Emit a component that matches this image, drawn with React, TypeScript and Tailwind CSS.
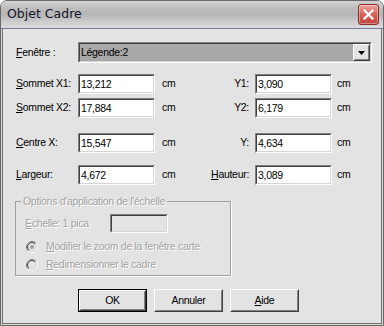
import type { ReactNode } from 'react'

const dim = 'text-[#a3a3a3] [text-shadow:1px_1px_0_#ffffff]'

function Sunken({ className, children }: { className?: string; children?: ReactNode }) {
  return (
    <div className={`border border-t-[#808080] border-l-[#808080] border-b-white border-r-white ${className ?? ''}`}>
      <div className="h-full w-full border border-t-[#404040] border-l-[#404040] border-b-[#d4d4d4] border-r-[#d4d4d4]">
        {children}
      </div>
    </div>
  )
}

function Field({ value }: { value: string }) {
  return (
    <Sunken className="h-[20px] w-[77px]">
      <div className="flex h-full items-center bg-white pl-[1px] leading-none">{value}</div>
    </Sunken>
  )
}

function Raised({ className, children }: { className?: string; children?: ReactNode }) {
  return (
    <div className={`border border-t-white border-l-white border-b-[#404040] border-r-[#404040] ${className ?? ''}`}>
      <div className="flex h-full w-full items-center justify-center border border-t-[#e3e3e3] border-l-[#e3e3e3] border-b-[#808080] border-r-[#808080] bg-[#e3e3e3]">
        {children}
      </div>
    </div>
  )
}

function Radio({ checked }: { checked?: boolean }) {
  return (
    <svg width="12" height="12" viewBox="0 0 12 12" className="shrink-0">
      <circle cx="6" cy="6" r="5.5" fill="none" stroke="#ffffff" />
      <path d="M2.1 9.9 A5.5 5.5 0 0 1 9.9 2.1" fill="none" stroke="#808080" />
      <circle cx="6" cy="6" r="4.5" fill="#e3e3e3" stroke="#d4d4d4" />
      <path d="M2.8 9.2 A4.5 4.5 0 0 1 9.2 2.8" fill="none" stroke="#404040" />
      {checked && <circle cx="6" cy="6" r="2" fill="#a0a0a0" />}
    </svg>
  )
}

function Row({ label, value, rlabel, rvalue }: { label: ReactNode; value: string; rlabel: ReactNode; rvalue: string }) {
  return (
    <div className="flex h-[20px] items-center">
      <div className="flex w-[233px] items-center">
        <div className="w-[62px]">{label}</div>
        <Field value={value} />
        <div className="ml-[7px]">cm</div>
        <div className="flex-1 text-right">{rlabel}</div>
      </div>
      <div className="ml-[6px]">
        <Field value={rvalue} />
      </div>
      <div className="ml-[5px]">cm</div>
    </div>
  )
}

export default function App() {
  return (
    <div className="h-[326px] w-[384px] font-['Liberation_Sans',Arial,sans-serif] text-[10.5px] tracking-[-0.3px] text-black">
      <div className="flex h-full flex-col overflow-hidden rounded-t-[7px] border border-[#6a6a6a]">
        <div className="flex h-[27px] items-center justify-between bg-[linear-gradient(to_bottom,#d2d2d2_0%,#bcbcbc_30%,#b6b6b6_50%,#cacaca_75%,#dcdcdc_100%)] pl-[6px] pr-[4px]">
          <span className="font-['DejaVu_Sans',sans-serif] text-[12.5px] tracking-normal text-[#14142a]">Objet Cadre</span>
          <div className="flex h-[21px] w-[21px] items-center justify-center rounded-[3px] border border-[#8c2f2a] bg-[linear-gradient(to_bottom,#eea59c_0%,#d5625a_50%,#c0453e_100%)] shadow-[inset_0_0_0_1px_rgba(255,255,255,0.35)]">
            <svg width="11" height="11" viewBox="0 0 11 11">
              <path d="M1.5 1.5 L9.5 9.5 M9.5 1.5 L1.5 9.5" stroke="#ffffff" strokeWidth="2.2" strokeLinecap="square" />
            </svg>
          </div>
        </div>
        <div className="h-px bg-[#7676a8]" />
        <div className="flex flex-1 flex-col bg-[#d6d6d6] px-px pb-px">
          <div className="flex flex-1 flex-col border-x border-b border-[#737373] bg-[#e3e3e3] pl-[13px] pt-[13px]">
            <div className="flex h-[21px] items-center">
              <div className="w-[62px]">
                <u>F</u>enêtre :
              </div>
              <Sunken className="h-[21px] w-[294px]">
                <div className="flex h-full items-center bg-[#a9a9a9]">
                  <span className="flex-1 pl-[1px]">Légende:2</span>
                  <Raised className="h-[17px] w-[17px]">
                    <svg width="7" height="4" viewBox="0 0 7 4">
                      <polygon points="0,0 7,0 3.5,4" fill="#000000" />
                    </svg>
                  </Raised>
                </div>
              </Sunken>
            </div>

            <div className="mt-[11px]">
              <Row
                label={<><u>S</u>ommet X1:</>}
                value="13,212"
                rlabel="Y1:"
                rvalue="3,090"
              />
            </div>
            <div className="mt-[4px]">
              <Row
                label={<><u>S</u>ommet X2:</>}
                value="17,884"
                rlabel="Y2:"
                rvalue="6,179"
              />
            </div>
            <div className="mt-[15px]">
              <Row label={<><u>C</u>entre X:</>} value="15,547" rlabel="Y:" rvalue="4,634" />
            </div>
            <div className="mt-[12px]">
              <Row
                label={<><u>L</u>argeur:</>}
                value="4,672"
                rlabel={<><u>H</u>auteur:</>}
                rvalue="3,089"
              />
            </div>

            <div className="relative -ml-px mt-[16px] h-[75px] w-[216px] border border-[#a0a0a0] shadow-[1px_1px_0_#ffffff] pl-[9px] pt-[12px]">
              <span className={`absolute -top-[8px] left-[5px] bg-[#e3e3e3] px-[2px] ${dim}`}>
                Options d'application de l'échelle
              </span>
              <div className="flex h-[19px] items-center">
                <div className={`w-[85px] ${dim}`}>
                  <u>E</u>chelle: 1 pica
                </div>
                <Sunken className="h-[19px] w-[58px]">
                  <div className="h-full bg-[#e3e3e3]" />
                </Sunken>
              </div>
              <div className="mt-[5px] flex h-[18px] items-center gap-[8px] pl-px">
                <Radio checked />
                <span className={dim}>
                  <u>M</u>odifier le zoom de la fenêtre carte
                </span>
              </div>
              <div className="flex h-[18px] items-center gap-[8px] pl-px">
                <Radio />
                <span className={dim}>
                  <u>R</u>edimensionner le cadre
                </span>
              </div>
            </div>

            <div className="ml-[62px] mt-[13px] flex gap-[7px]">
              <div className="h-[23px] w-[69px] border border-black">
                <Raised className="h-full w-full">OK</Raised>
              </div>
              <Raised className="h-[23px] w-[69px]">Annuler</Raised>
              <Raised className="h-[23px] w-[69px]">
                <span>
                  <u>A</u>ide
                </span>
              </Raised>
            </div>
          </div>
        </div>
      </div>
    </div>
  )
}
